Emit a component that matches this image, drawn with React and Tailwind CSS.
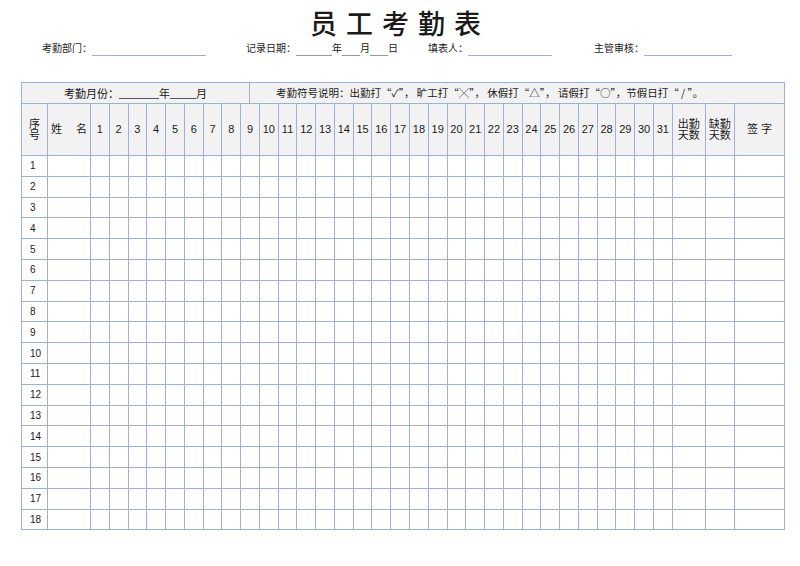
const days = Array.from({ length: 31 }, (_, i) => i + 1);
const rows = Array.from({ length: 18 }, (_, i) => i + 1);
const cell = 'border border-[#9bb0de] p-0 text-center';

export default function App() {
  return (
    <div className="w-[800px] h-[566px] bg-white text-[#1a1a1a]" style={{ fontFamily: '"Liberation Sans", "Noto Sans CJK SC", sans-serif' }}>
      <h1 className="pt-[8px] text-center text-[27px] leading-[34px] tracking-[9px] font-medium">员工考勤表</h1>
      <div className="flex items-end text-[10px] h-[14px] px-[42px]">
        <span>考勤部门：</span>
        <span className="w-[114px] border-b border-[#9bb0de] mr-[40px]" />
        <span>记录日期：</span>
        <span className="w-[36px] border-b border-[#999]" />年
        <span className="w-[18px] border-b border-[#999]" />月
        <span className="w-[18px] border-b border-[#999]" />日
        <span className="ml-[30px]">填表人：</span>
        <span className="w-[84px] border-b border-[#9bb0de] mr-[42px]" />
        <span>主管审核：</span>
        <span className="w-[88px] border-b border-[#9bb0de]" />
      </div>
      <table className="mt-[26px] ml-[21px] w-[763px] border-collapse table-fixed text-[11px]">
        <colgroup>
          <col className="w-[26px]" />
          <col className="w-[43px]" />
          {days.map((d) => <col key={d} className="w-[18.77px]" />)}
          <col className="w-[33px]" />
          <col className="w-[29px]" />
          <col className="w-[50px]" />
        </colgroup>
        <tbody>
          <tr className="h-[21px] bg-[#f2f2f2]">
            <td colSpan={36} className="border border-[#9bb0de] p-0">
              <div className="flex h-[20px] items-center" style={{ fontFamily: '"Noto Sans CJK SC", sans-serif' }}>
                <div className="w-[228px] h-full flex items-center justify-center border-r border-[#9bb0de]">
                  考勤月份：<span className="inline-block w-[40px] h-[12px] border-b border-[#555]" />年<span className="inline-block w-[26px] h-[12px] border-b border-[#555]" />月
                </div>
                <div className="pl-[26px] text-[10.5px]">
                  考勤符号说明：出勤打“✓”， 旷工打“╳”， 休假打“△”， 请假打“○”，节假日打“ / ”。
                </div>
              </div>
            </td>
          </tr>
          <tr className="h-[52px] bg-[#f2f2f2]">
            <td className={cell + ' leading-[11px]'}>序<br />号</td>
            <td className={cell}><div className="flex justify-between px-[3px]"><span>姓</span><span>名</span></div></td>
            {days.map((d) => <td key={d} className={cell}>{d}</td>)}
            <td className={cell + ' leading-[11px]'}>出勤<br />天数</td>
            <td className={cell + ' leading-[11px]'}>缺勤<br />天数</td>
            <td className={cell}>签 字</td>
          </tr>
          {rows.map((r) => (
            <tr key={r} className="h-[20.8px]">
              <td className={cell + ' text-left pl-[8px] text-[10px]'}>{r}</td>
              <td className={cell} />
              {days.map((d) => <td key={d} className={cell} />)}
              <td className={cell} />
              <td className={cell} />
              <td className={cell} />
            </tr>
          ))}
        </tbody>
      </table>
    </div>
  );
}
